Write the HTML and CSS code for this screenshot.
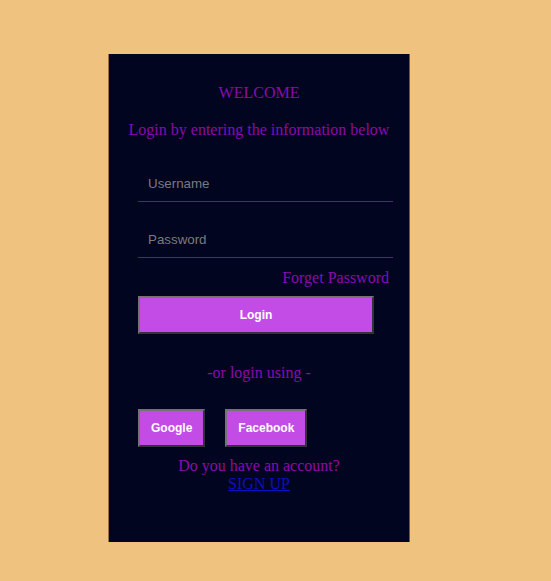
FILE: index.html
```html
<!DOCTYPE html>
<html lang="en">
<head>
<meta charset="utf-8">
<title>Login</title>
<link rel="stylesheet" href="styles.css">
</head>
<body>
  <div class="card">
    <p class="title">WELCOME</p>
    <p class="subtitle">Login by entering the information below</p>
    <form class="form">
      <input class="field" type="text" placeholder="Username">
      <input class="field field-second" type="password" placeholder="Password">
      <p class="forget">Forget Password</p>
      <button class="btn btn-login" type="button">Login</button>
      <p class="or">-or login using -</p>
      <div class="socials">
        <button class="btn btn-social" type="button">Google</button>
        <button class="btn btn-social" type="button">Facebook</button>
      </div>
    </form>
    <p class="account">Do you have an account?<br><a class="signup" href="#">SIGN UP</a></p>
  </div>
</body>
</html>
```

FILE: styles.css
```css
html, body {
  margin: 0;
  padding: 0;
}

body {
  background: #f0c27f;
  font-family: "Liberation Serif", "Times New Roman", serif;
  font-size: 16px;
  line-height: 18px;
  color: #8a0cae;
}

.card {
  box-sizing: border-box;
  margin: 54px 0 0 108px;
  width: 302px;
  height: 488px;
  padding-top: 30px;
  background: #020520;
  border-left: 1px solid #9a7447;
  border-right: 1px solid #5e5e62;
}

.title,
.subtitle,
.or,
.account,
.forget {
  margin: 0;
  text-align: center;
}

.subtitle {
  margin-top: 19px;
}

.form {
  padding: 0 16px 0 29px;
  margin-top: 27px;
}

.field {
  display: block;
  box-sizing: border-box;
  width: 255px;
  height: 36px;
  margin: 0;
  padding: 0 10px;
  background: transparent;
  border: none;
  border-bottom: 1px solid #6c139c;
  font-family: "Liberation Sans", Arial, sans-serif;
  font-size: 13.33px;
  color: #cccccc;
  outline: none;
}

.field::placeholder {
  color: #7a7a7e;
}

.field-second {
  margin-top: 20px;
}

.forget {
  margin-top: 11px;
  text-align: right;
  padding-right: 4px;
}

.btn {
  box-sizing: border-box;
  height: 38px;
  margin: 0;
  background: #c44ce6;
  border: 2px solid #737373;
  border-right-color: #34323a;
  border-bottom-color: #34323a;
  color: #ffffff;
  font-family: "Liberation Sans", Arial, sans-serif;
  font-weight: bold;
  font-size: 12px;
  cursor: pointer;
}

.btn-login {
  display: block;
  width: 236px;
  margin-top: 9px;
}

.or {
  margin-top: 30px;
  text-align: center;
  margin-left: -29px;
  margin-right: -16px;
}

.socials {
  display: flex;
  gap: 20px;
  margin-top: 27px;
}

.btn-social {
  padding: 0 11px;
}

.account {
  margin-top: 10px;
}

.signup {
  color: #0d0fc4;
  text-decoration: underline;
}
```
